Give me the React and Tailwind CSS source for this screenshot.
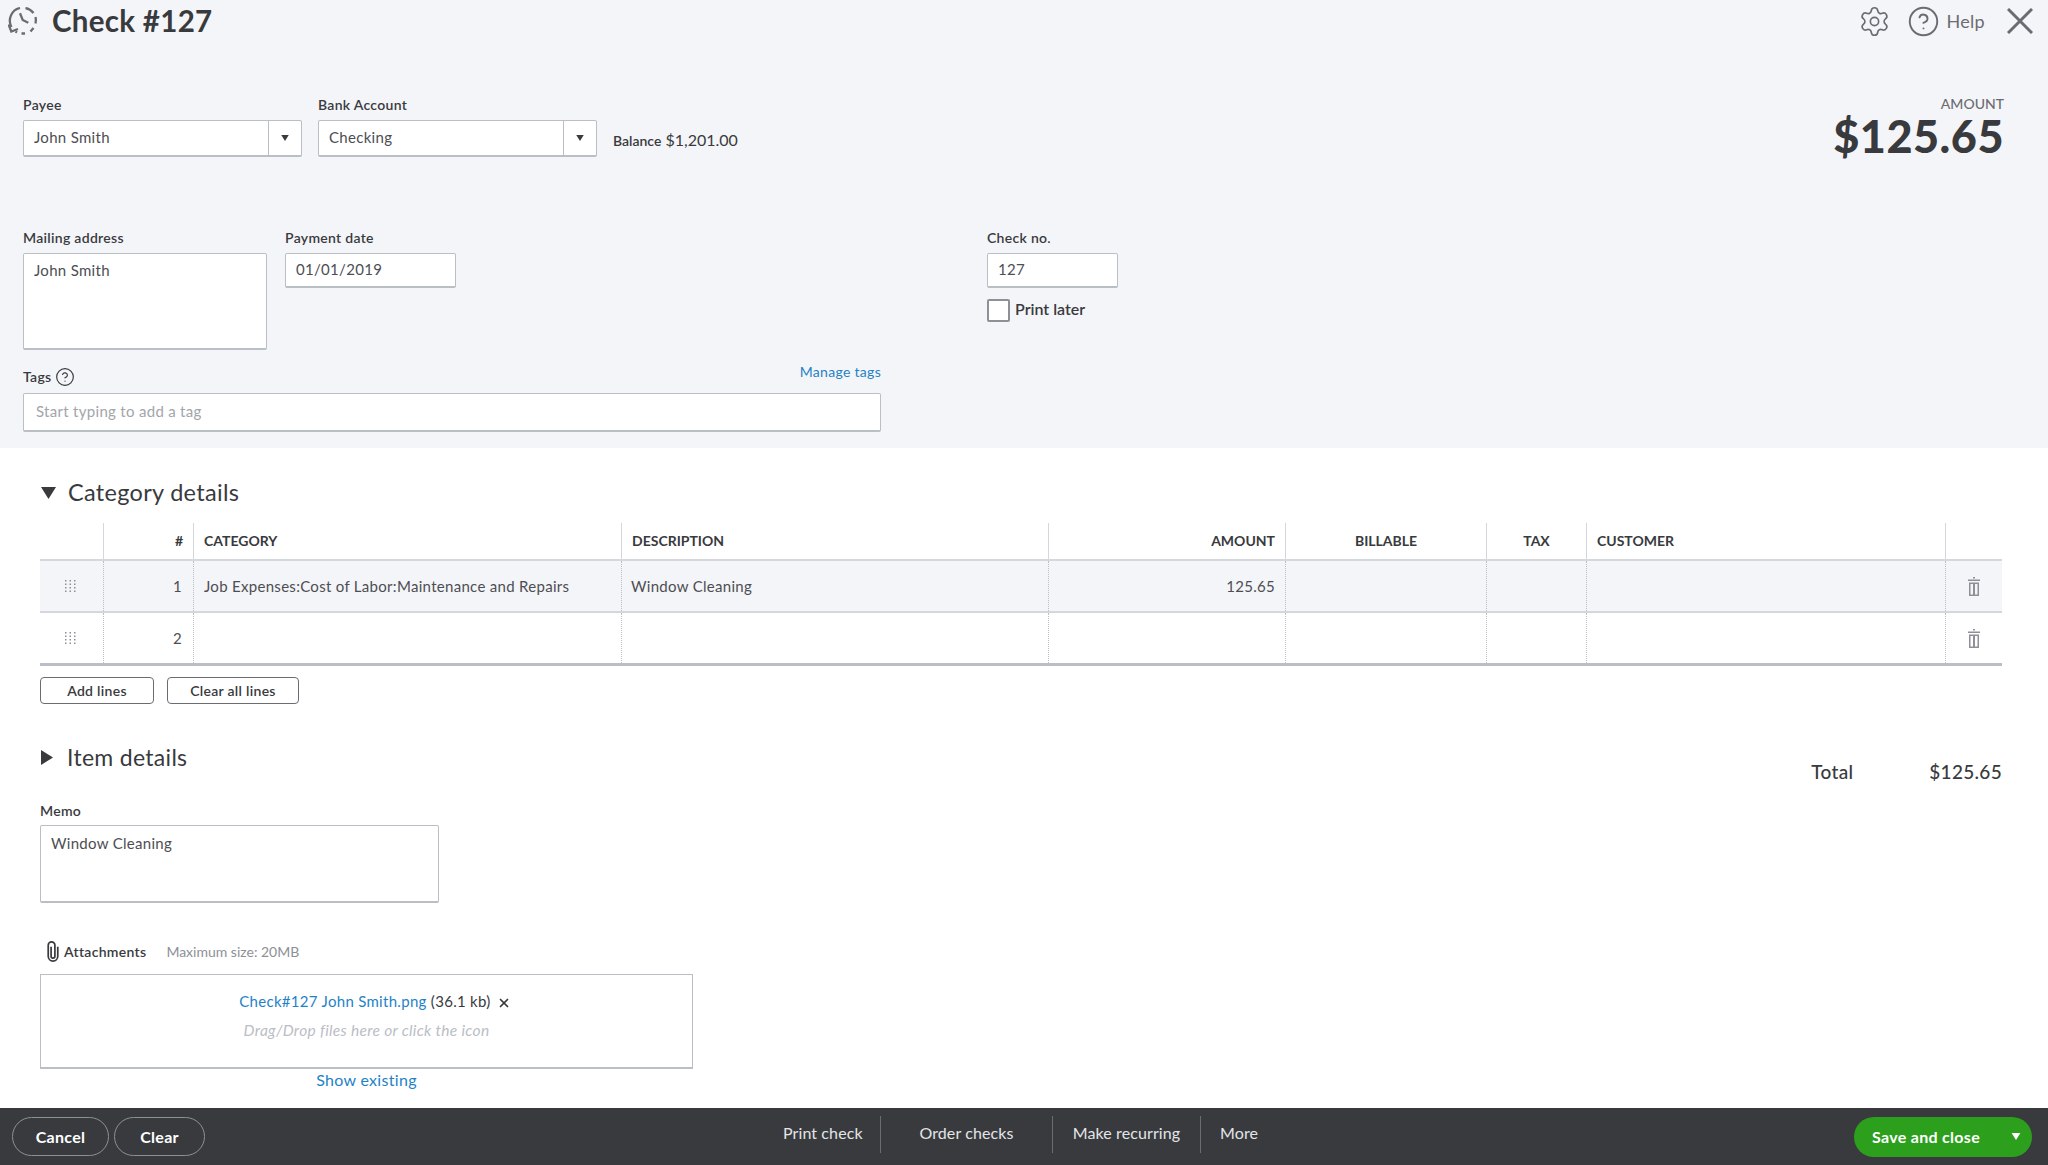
import { Settings, CircleHelp, X } from "lucide-react"

const Label = ({ children, className = "" }) => (
  <div className={`text-[14px] leading-[18px] font-semibold text-[#393a3d] ${className}`}>{children}</div>
)

const Caret = ({ className = "" }) => (
  <svg viewBox="0 0 10 8" className={className} fill="currentColor"><path d="M0 0h10L5 8z" /></svg>
)

const ComboBox = ({ value }) => (
  <div className="mt-[6px] flex h-[37px] w-[279px] border border-[#babec5] border-b-2 bg-white rounded-[2px]">
    <div className="flex-1 pl-[10px] text-[15px] leading-[33px] text-[#4d4e53]">{value}</div>
    <div className="flex w-[33px] items-center justify-center border-l border-[#babec5] text-[#393a3d]">
      <Caret className="h-[6px] w-[8px]" />
    </div>
  </div>
)

const ClockIcon = () => (
  <svg viewBox="0 0 30 28" className="h-[28px] w-[30px] text-[#6b6c72]" fill="none" stroke="currentColor" strokeWidth="2.300">
    <path d="M3.500 20A13 13 0 0 1 12 1" />
    <path d="M17.500 1A13 13 0 0 1 25.500 6" />
    <path d="M27.500 10A13 13 0 0 1 27.500 16.500" />
    <path d="M25.500 21l-3 3.500M17 26.500h-3.500M9 25.500l-1.500-1" />
    <path d="M12 6.300l2.700 6.700 5.600 2.700" />
    <path d="M0.500 17.500l2.800 7 6.700-2.500" />
  </svg>
)

const TrashIcon = () => (
  <svg viewBox="0 0 12 19" className="h-[19px] w-[12px] text-[#8d9096]" fill="currentColor">
    <path d="M5 0h2v1.500H5zM0 2.500h12V4H0zM1 5.500h10V19H1zM2.500 7v10.500H5V7zM7 7v10.500h2.500V7z" fillRule="evenodd" />
  </svg>
)

const GripIcon = () => (
  <svg viewBox="0 0 11 12" className="h-[12px] w-[11px] text-[#8d9096]" fill="currentColor">
    {[0, 4.500, 9].map((x) => [0, 3.500, 7, 10.500].map((y) => <rect key={`${x}-${y}`} x={x} y={y} width="1.500" height="1.500" />))}
  </svg>
)

const ClipIcon = () => (
  <svg viewBox="0 0 14 22" className="h-[21px] w-[14px] text-[#393a3d]" fill="none" stroke="currentColor" strokeWidth="1.800">
    <path d="M5 6v10a2 2 0 0 0 4 0V4.500a3.500 3.500 0 0 0-7 0V16a5 5 0 0 0 10 0V6" />
  </svg>
)

const cols = ["w-[63px]", "w-[90px]", "w-[428px]", "w-[427px]", "w-[237px]", "w-[201px]", "w-[100px]", "w-[359px]", "flex-1"]

const headers = [
  { text: "" },
  { text: "#", align: "text-right" },
  { text: "CATEGORY" },
  { text: "DESCRIPTION" },
  { text: "AMOUNT", align: "text-right" },
  { text: "BILLABLE", align: "text-center" },
  { text: "TAX", align: "text-center" },
  { text: "CUSTOMER" },
  { text: "" },
]

const TableRow = ({ num, category, description, amount, shaded }) => (
  <div className={`flex text-[15px] text-[#4d4e53] ${shaded ? "h-[52px] bg-[#f4f5f8] border-b-2 border-[#d4d7dc]" : "h-[50px]"}`}>
    <div className={`${cols[0]} flex items-center justify-center pr-[3px]`}><GripIcon /></div>
    <div className={`${cols[1]} flex items-center justify-end border-l border-dotted border-[#babec5] pr-[11px]`}>{num}</div>
    <div className={`${cols[2]} flex items-center border-l border-dotted border-[#babec5] px-[10px]`}>{category}</div>
    <div className={`${cols[3]} flex items-center border-l border-dotted border-[#babec5] px-[9px]`}>{description}</div>
    <div className={`${cols[4]} flex items-center justify-end border-l border-dotted border-[#babec5] pr-[10px]`}>{amount}</div>
    <div className={`${cols[5]} border-l border-dotted border-[#babec5]`} />
    <div className={`${cols[6]} border-l border-dotted border-[#babec5]`} />
    <div className={`${cols[7]} border-l border-dotted border-[#babec5]`} />
    <div className={`${cols[8]} flex items-center justify-center border-l border-dotted border-[#babec5]`}><TrashIcon /></div>
  </div>
)

const FooterLink = ({ children, className = "" }) => (
  <div className={`flex h-[37px] items-center pb-[3px] text-[16px] tracking-[0.1px] text-[#e3e5e8] ${className}`}>{children}</div>
)

export default function App() {
  return (
    <div className="relative h-[1165px] w-[2048px] overflow-hidden bg-white font-['Lato','Noto_Sans',sans-serif] tracking-[0.3px] text-[#393a3d]">
      {/* top form */}
      <div className="h-[448px] bg-[#f4f5f8] px-[23px]">
        <div className="flex h-[42px] items-center justify-between">
          <div className="-ml-[15px] flex items-center gap-[14px]">
            <ClockIcon />
            <h1 className="text-[29.500px] font-bold text-[#393a3d]">Check #127</h1>
          </div>
          <div className="-mr-[8px] flex items-center text-[#6b6c72]">
            <Settings size={33} strokeWidth={1.2} />
            <CircleHelp size={33} strokeWidth={1.400} className="ml-[16px]" />
            <span className="ml-[6px] text-[18px]">Help</span>
            <svg viewBox="0 0 26 26" className="ml-[22px] h-[26px] w-[26px]" fill="none" stroke="currentColor" strokeWidth="3">
              <path d="M1 1l24 24M25 1L1 25" />
            </svg>
          </div>
        </div>

        <div className="mt-[54px] flex justify-between">
          <div className="flex">
            <div>
              <Label>Payee</Label>
              <ComboBox value="John Smith" />
            </div>
            <div className="ml-[16px]">
              <Label>Bank Account</Label>
              <ComboBox value="Checking" />
            </div>
            <div className="ml-[16px] mt-[34px] text-[16px] leading-[20px] tracking-normal">
              <span className="text-[14px] font-semibold">Balance</span> $1,201.00
            </div>
          </div>
          <div className="-mt-[1px] mr-[21px] text-right">
            <div className="text-[14px] leading-[18px] font-medium tracking-normal text-[#6b6c72]">AMOUNT</div>
            <div className="text-[45px] leading-[46px] font-black tracking-[0.5px] text-[#393a3d]">$125.65</div>
          </div>
        </div>

        <div className="mt-[70px] flex">
          <div>
            <Label>Mailing address</Label>
            <div className="mt-[6px] h-[97px] w-[244px] rounded-[2px] border border-b-2 border-[#babec5] bg-white px-[10px] py-[5px] text-[15px] text-[#4d4e53]">John Smith</div>
          </div>
          <div className="ml-[18px]">
            <Label>Payment date</Label>
            <div className="mt-[6px] h-[35px] w-[171px] rounded-[2px] border border-b-2 border-[#babec5] bg-white px-[10px] text-[15px] leading-[31px] text-[#4d4e53]">01/01/2019</div>
          </div>
          <div className="ml-[531px]">
            <Label>Check no.</Label>
            <div className="mt-[6px] h-[35px] w-[131px] rounded-[2px] border border-b-2 border-[#babec5] bg-white px-[10px] text-[15px] leading-[31px] text-[#4d4e53]">127</div>
            <div className="mt-[11px] flex items-center">
              <div className="h-[23px] w-[23px] rounded-[2px] border-2 border-[#8d9096] bg-white" />
              <span className="ml-[5px] -mt-[3px] text-[16px] font-semibold tracking-normal">Print later</span>
            </div>
          </div>
        </div>

        <div className="mt-[11px] w-[858px]">
          <div className="flex items-end justify-between">
            <div className="flex items-center gap-[4px]">
              <Label>Tags</Label>
              <CircleHelp size={20} strokeWidth={1.400} />
            </div>
            <a className="mb-[5px] text-[14px] text-[#1f82c6]">Manage tags</a>
          </div>
          <div className="mt-[6px] h-[39px] rounded-[2px] border border-b-2 border-[#babec5] bg-white px-[12px] text-[15px] leading-[35px] text-[#a3a5aa]">Start typing to add a tag</div>
        </div>
      </div>

      {/* lines */}
      <div className="px-[40px]">
        <div className="mt-[30px] flex h-[30px] items-center">
          <Caret className="ml-[1px] h-[12px] w-[15px]" />
          <span className="ml-[12px] text-[23.500px]">Category details</span>
        </div>

        <div className="mt-[15px] w-[1962px]">
          <div className="flex h-[38px] border-b-2 border-[#d4d7dc] text-[14px] font-bold tracking-normal text-[#393a3d]">
            {headers.map((h, i) => (
              <div
                key={i}
                className={`${cols[i]} ${h.align || ""} ${i > 0 ? "border-l border-[#d4d7dc]" : ""} px-[10px] leading-[36px]`}
              >
                {h.text}
              </div>
            ))}
          </div>
          <TableRow shaded num="1" category="Job Expenses:Cost of Labor:Maintenance and Repairs" description="Window Cleaning" amount="125.65" />
          <TableRow num="2" />
          <div className="h-[3px] bg-[#babec5]" />
        </div>

        <div className="mt-[11px] flex gap-[13px]">
          <button className="h-[27px] w-[114px] rounded-[4px] border border-[#6b6c72] text-[14px] font-semibold">Add lines</button>
          <button className="h-[27px] w-[132px] rounded-[4px] border border-[#6b6c72] text-[14px] font-semibold">Clear all lines</button>
        </div>

        <div className="flex items-start justify-between">
          <div className="mt-[38px] flex h-[30px] items-center">
            <svg viewBox="0 0 8 10" className="ml-[1px] h-[15px] w-[12px]" fill="currentColor"><path d="M0 0l8 5-8 5z" /></svg>
            <span className="ml-[14px] text-[23px]">Item details</span>
          </div>
          <div className="mt-[54px] mr-[6px] flex text-[19px] font-medium">
            <span>Total</span>
            <span className="ml-[76px]">$125.65</span>
          </div>
        </div>

        <Label className="mt-[15px]">Memo</Label>
        <div className="mt-[5px] h-[78px] w-[399px] rounded-[2px] border border-b-2 border-[#babec5] bg-white px-[10px] py-[6px] text-[15px] text-[#4d4e53]">Window Cleaning</div>

        <div className="mt-[38px] flex items-center">
          <div className="ml-[6px]"><ClipIcon /></div>
          <span className="ml-[4px] text-[14px] font-semibold">Attachments</span>
          <span className="ml-[20px] text-[14px] tracking-normal text-[#8d9096]">Maximum size: 20MB</span>
        </div>
        <div className="mt-[12px] h-[95px] w-[653px] border border-b-2 border-[#babec5] pt-[16px] text-center text-[15px]">
          <div className="pl-[17px] leading-[20px]">
            <span className="text-[#1f82c6]">Check#127 John Smith.png</span> (36.1 kb) <X size={14} strokeWidth={3} className="ml-[2px] inline-block" />
          </div>
          <div className="mt-[8px] text-[15.500px] italic text-[#babec5]">Drag/Drop files here or click the icon</div>
        </div>
        <div className="w-[653px] text-center text-[16px] leading-[22px] text-[#1f82c6]">Show existing</div>
      </div>

      {/* footer bar */}
      <div className="absolute bottom-0 left-0 flex h-[57px] w-full items-center justify-between bg-[#393a3d] pl-[12px] pr-[16px]">
        <div className="flex gap-[5px]">
          <button className="h-[39px] w-[97px] rounded-full border border-[#8d9096] text-[16px] font-bold text-white">Cancel</button>
          <button className="h-[39px] w-[91px] rounded-full border border-[#8d9096] text-[16px] font-bold text-white">Clear</button>
        </div>
        <div className="absolute left-[783px] top-[8px] flex">
          <FooterLink className="w-[98px] border-r border-[#6b6c72]">Print check</FooterLink>
          <FooterLink className="w-[172px] justify-center border-r border-[#6b6c72]">Order checks</FooterLink>
          <FooterLink className="w-[148px] justify-center border-r border-[#6b6c72]">Make recurring</FooterLink>
          <FooterLink className="ml-[19px]">More</FooterLink>
        </div>
        <div className="flex h-[40px] w-[178px] items-center justify-between rounded-full bg-[#2ca01c] pl-[18px] pr-[11px] text-white">
          <span className="text-[16px] font-bold">Save and close</span>
          <Caret className="h-[7px] w-[10px]" />
        </div>
      </div>
    </div>
  )
}
